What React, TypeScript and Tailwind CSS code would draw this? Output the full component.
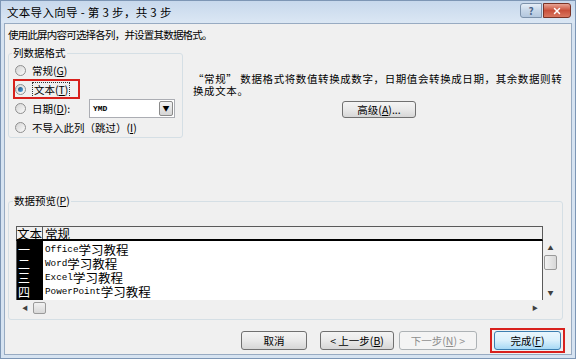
import { X } from "lucide-react";

// underlined access key, e.g. (G)
function Key({ k }: { k: string }) {
  return (
    <>
      (<span className="underline underline-offset-[1px]">{k}</span>)
    </>
  );
}

function Radio({ checked }: { checked?: boolean }) {
  return (
    <span className="flex h-[11px] w-[11px] shrink-0 items-center justify-center rounded-full border border-[#8f8f8f] bg-gradient-to-br from-[#d4d4d4] to-[#fbfbfb]">
      {checked && <span className="h-[5px] w-[5px] rounded-full bg-gradient-to-br from-[#1b4a78] to-[#55aee8]" />}
    </span>
  );
}

const rows = [
  { n: "一", latin: "Office", cjk: "学习教程" },
  { n: "二", latin: "Word", cjk: "学习教程" },
  { n: "三", latin: "Excel", cjk: "学习教程" },
  { n: "四", latin: "PowerPoint", cjk: "学习教程" },
];

export default function App() {
  return (
    <div className="flex h-[359px] w-[576px] flex-col overflow-hidden border border-[#7d96b5] bg-[#d6e3f1] font-['Noto_Sans_CJK_SC','Noto_Sans',sans-serif] text-black">
      {/* Title bar */}
      <div className="flex h-[22px] shrink-0 items-start justify-between bg-gradient-to-b from-[#c7d8ec] to-[#dbe7f4]">
        <div className="pl-[6px] pt-[3px] text-[11.5px] leading-[16px] tracking-[0.3px]">文本导入向导 - 第 3 步，共 3 步</div>
        <div className="mr-[4px] mt-[2px] flex gap-[1px]">
          <div className="flex h-[15px] w-[22px] items-center justify-center rounded-l-[3px] border border-[#7d92ab] bg-gradient-to-b from-[#e6eef7] via-[#c6d6e8] to-[#b3c7de] text-[10px] font-bold leading-none text-[#4a6488]">
            ?
          </div>
          <div className="flex h-[15px] w-[28px] items-center justify-center rounded-r-[3px] border border-[#7a3326] bg-gradient-to-b from-[#e8a494] via-[#c8503b] to-[#d9765f]">
            <X size={10} strokeWidth={3.5} className="text-white" />
          </div>
        </div>
      </div>

      {/* Dialog body */}
      <div className="mx-[3px] mb-[3px] flex flex-1 flex-col border border-[#98abc2] bg-[#f0f0f0] px-[3px] text-[10.5px]">
        <div className="mt-[4px] leading-[14px] tracking-[-0.8px]">使用此屏内容可选择各列，并设置其数据格式。</div>

        <div className="mt-[4px] flex">
          <fieldset className="w-[175px] rounded-[3px] border border-[#d5dfe5] px-[6px] pt-[1px]">
            <legend className="ml-[-3px] px-[1px] leading-[14px]">列数据格式</legend>
            <div className="flex h-[19px] items-center gap-[6px] leading-[14px]">
              <Radio />
              <span>常规<Key k="G" /></span>
            </div>
            <div className="relative flex h-[19px] items-center gap-[6px] leading-[14px]">
              <Radio checked />
              <span className="border border-dotted border-[#333] px-[1px]">文本<Key k="T" /></span>
              <div className="absolute left-[-2px] top-[-1px] h-[20px] w-[67px] border-2 border-[#d8201c]" />
            </div>
            <div className="flex h-[19px] items-center gap-[6px] leading-[14px]">
              <Radio />
              <span className="w-[50px]">日期<Key k="D" />:</span>
              <div className="ml-[1px] flex h-[19px] w-[86px] items-center border border-[#abadb3] bg-white">
                <span className="flex-1 pl-[3px] font-['Liberation_Mono',monospace] text-[8px] font-bold">YMD</span>
                <span className="mr-[1px] flex h-[15px] w-[14px] items-center justify-center rounded-[2px] border border-[#8a8a8a] bg-gradient-to-b from-[#f4f4f4] to-[#d5d5d5] text-[7px] leading-none">
                  ▼
                </span>
              </div>
            </div>
            <div className="flex h-[19px] items-center gap-[6px] leading-[14px]">
              <Radio />
              <span>不导入此列（跳过）<Key k="I" /></span>
            </div>
          </fieldset>

          <div className="ml-[10px] flex flex-col">
            <div className="mt-[27px] whitespace-nowrap leading-[12px] tracking-[0.6px]">
              “常规” 数据格式将数值转换成数字，日期值会转换成日期，其余数据则转
              <br />
              换成文本。
            </div>
            <button className="ml-[149px] mt-[4px] flex h-[17px] w-[74px] items-center justify-center rounded-[3px] border border-[#707070] bg-gradient-to-b from-[#f4f4f4] via-[#e9e9e9] to-[#d6d6d6] leading-[14px]">
              高级<Key k="A" />...
            </button>
          </div>
        </div>

        <fieldset className="mr-[5px] mt-[56px] rounded-[3px] border border-[#d5dfe5] pb-[4px] pl-[7px] pt-[18px]">
          <legend className="ml-[-3px] px-[1px] leading-[14px]">数据预览<Key k="P" /></legend>
          <div className="w-[542px]">
            <div className="flex h-[15px] w-[527px] border-x border-b-2 border-t border-[#5a5a5a] border-b-black bg-[#f0f0f0] text-[12.5px] leading-[13px]">
              <div className="w-[26px] border-r border-[#5a5a5a]">文本</div>
              <div className="pl-[2px]">常规</div>
            </div>
            <div className="flex h-[59px]">
              <div className="flex w-[527px] overflow-hidden border-x border-[#5a5a5a] bg-white text-[12px] leading-[14px]">
                <div className="w-[26px] bg-black pt-[2px] text-white">
                  {rows.map((r) => (
                    <div key={r.n} className="h-[14px] pl-[1px]">{r.n}</div>
                  ))}
                </div>
                <div className="pl-[2px] pt-[2px]">
                  {rows.map((r) => (
                    <div key={r.n} className="flex h-[14px] items-center whitespace-nowrap">
                      <span className="font-['Liberation_Mono',monospace] text-[9.3px]">{r.latin}</span>
                      <span className="text-[12.5px]">{r.cjk}</span>
                    </div>
                  ))}
                </div>
              </div>
              <div className="flex w-[15px] flex-col items-center">
                <span className="mt-[3px] text-[6px] leading-[8px] text-[#404040]">▲</span>
                <span className="mt-[3px] h-[15px] w-[13px] rounded-[2px] border border-[#9a9a9a] bg-gradient-to-r from-[#f2f2f2] to-[#d8d8d8]" />
                <span className="mt-auto mb-[3px] text-[6px] leading-[8px] text-[#404040]">▼</span>
              </div>
            </div>
            <div className="flex h-[15px] w-[527px] items-center">
              <span className="ml-[6px] text-[6px] leading-none text-[#404040]">◀</span>
              <span className="ml-[5px] h-[12px] w-[13px] rounded-[2px] border border-[#9a9a9a] bg-gradient-to-b from-[#f2f2f2] to-[#d8d8d8]" />
              <span className="ml-auto mr-[5px] text-[6px] leading-none text-[#404040]">▶</span>
            </div>
          </div>
        </fieldset>

        <div className="mt-[11px] flex pr-[7px] leading-[14px]">
          <button className="ml-auto flex h-[19px] w-[66px] items-center justify-center rounded-[3px] border border-[#707070] bg-gradient-to-b from-[#f4f4f4] via-[#e9e9e9] to-[#d6d6d6]">
            取消
          </button>
          <button className="ml-[13px] flex h-[19px] w-[74px] items-center justify-center rounded-[3px] border border-[#707070] bg-gradient-to-b from-[#f4f4f4] via-[#e9e9e9] to-[#d6d6d6]">
            &lt; 上一步<Key k="B" />
          </button>
          <button className="ml-[5px] flex h-[19px] w-[78px] items-center justify-center rounded-[3px] border border-[#adb2b5] bg-[#f4f4f4] text-[#8d8d8d]">
            下一步<Key k="N" /> &gt;
          </button>
          <div className="relative ml-[17px]">
            <button className="flex h-[19px] w-[67px] items-center justify-center rounded-[3px] border border-[#3c7fb1] bg-gradient-to-b from-[#eaf6fd] via-[#d9f0fc] to-[#a7d9f5]">
              完成<Key k="F" />
            </button>
            <div className="absolute -inset-x-[4px] -inset-y-[3px] border-2 border-[#d8201c]" />
          </div>
        </div>
      </div>
    </div>
  );
}
